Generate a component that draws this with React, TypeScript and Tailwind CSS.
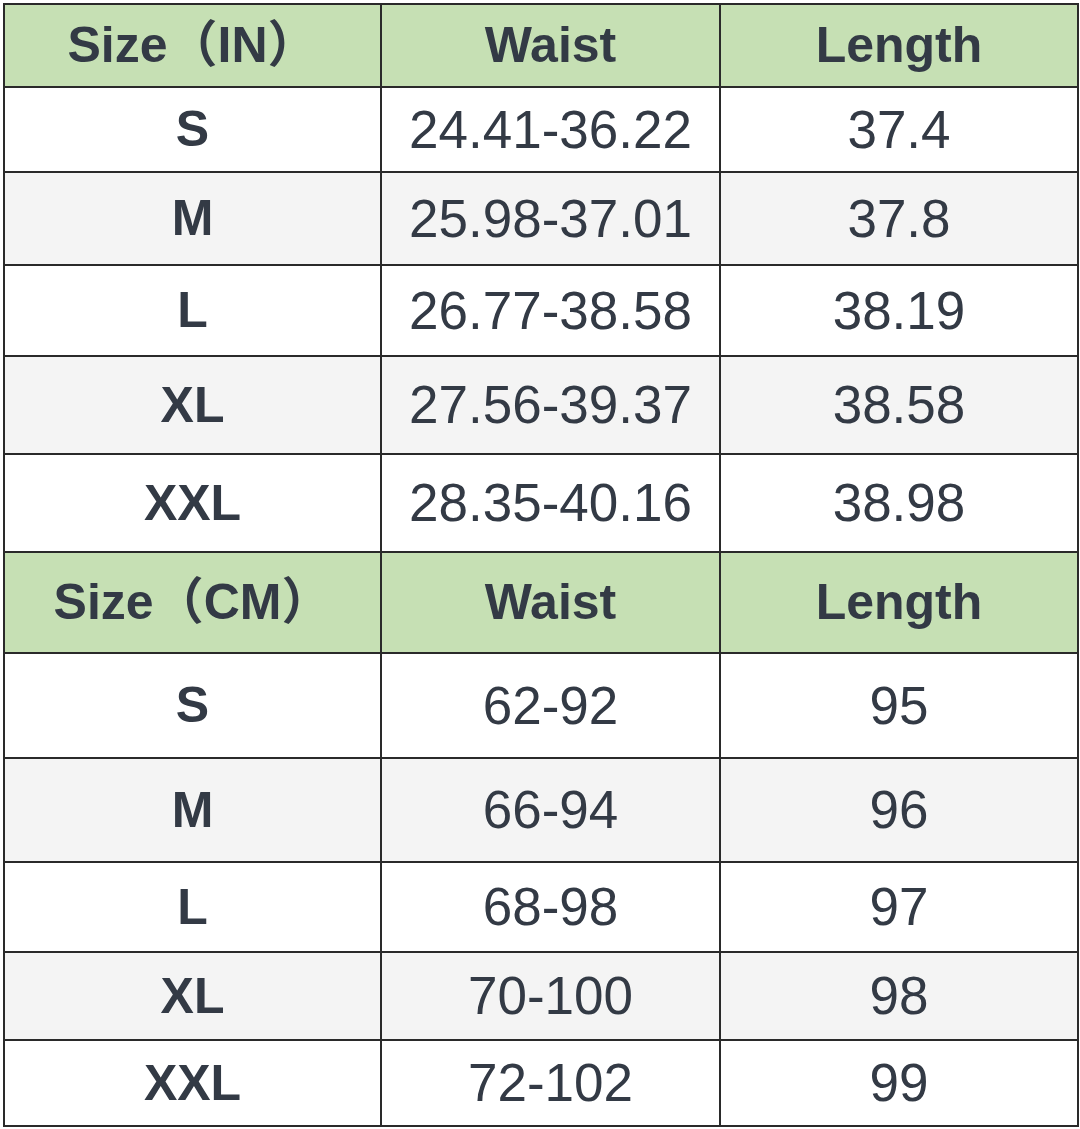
const rows: { kind: "head" | "row"; cells: string[]; h: number; gray?: boolean }[] = [
  { kind: "head", cells: ["Size（IN）", "Waist", "Length"], h: 83 },
  { kind: "row", cells: ["S", "24.41-36.22", "37.4"], h: 85 },
  { kind: "row", cells: ["M", "25.98-37.01", "37.8"], h: 93, gray: true },
  { kind: "row", cells: ["L", "26.77-38.58", "38.19"], h: 91 },
  { kind: "row", cells: ["XL", "27.56-39.37", "38.58"], h: 98, gray: true },
  { kind: "row", cells: ["XXL", "28.35-40.16", "38.98"], h: 98 },
  { kind: "head", cells: ["Size（CM）", "Waist", "Length"], h: 101 },
  { kind: "row", cells: ["S", "62-92", "95"], h: 105 },
  { kind: "row", cells: ["M", "66-94", "96"], h: 104, gray: true },
  { kind: "row", cells: ["L", "68-98", "97"], h: 90 },
  { kind: "row", cells: ["XL", "70-100", "98"], h: 88, gray: true },
  { kind: "row", cells: ["XXL", "72-102", "99"], h: 86 },
];

const widths = ["w-[377px]", "w-[339px]", "w-[358px]"];

export default function App() {
  return (
    <div className="bg-white min-h-[1129px] pt-[3px] pl-[3px] text-[#333a45] font-['Liberation_Sans','Noto_Sans_CJK_SC',sans-serif]">
      <div className="w-[1076px] border-l-2 border-t-2 border-[#2a2a2a] flex flex-col">
        {rows.map((r, i) => (
          <div
            key={i}
            style={{ height: r.h }}
            className={`flex ${r.kind === "head" ? "bg-[#c6e0b4]" : r.gray ? "bg-[#f4f4f4]" : "bg-white"}`}
          >
            {r.cells.map((c, j) => {
              const bold = r.kind === "head" || j === 0;
              return (
                <div
                  key={j}
                  className={`${widths[j]} h-full shrink-0 border-r-2 border-b-2 border-[#2a2a2a] flex items-center justify-center ${
                    bold ? "font-bold text-[50px]" : "text-[53px]"
                  }`}
                >
                  {c}
                </div>
              );
            })}
          </div>
        ))}
      </div>
    </div>
  );
}
